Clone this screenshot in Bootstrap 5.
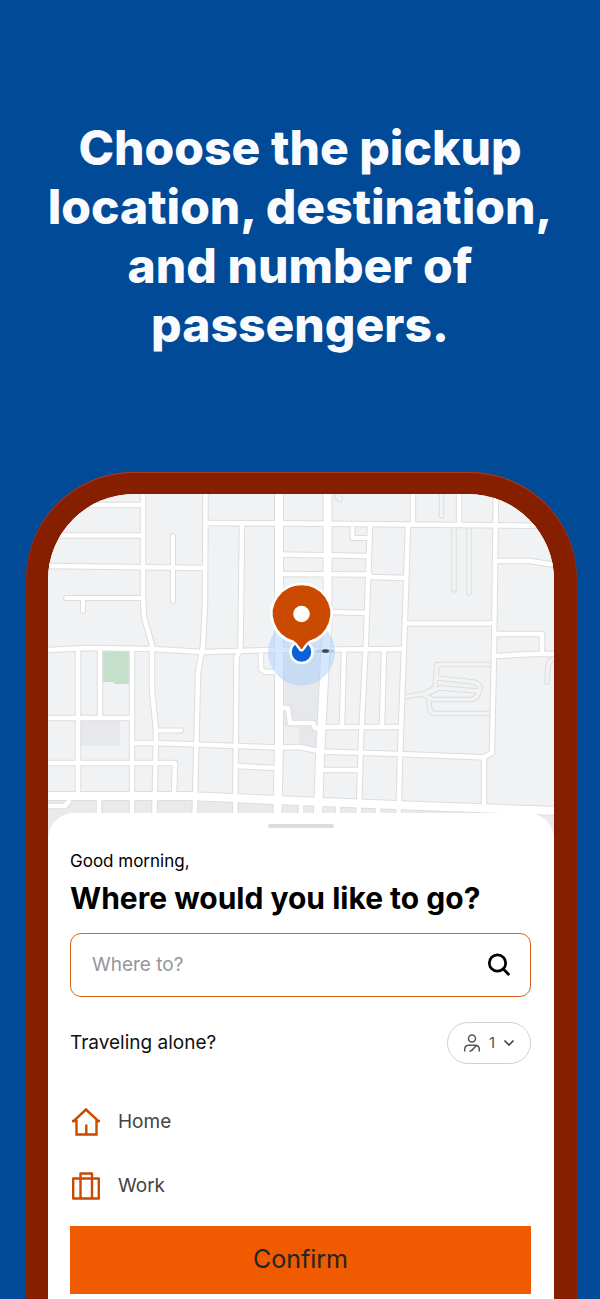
<!DOCTYPE html>
<html lang="en">
<head>
<meta charset="utf-8">
<meta name="viewport" content="width=device-width, initial-scale=1">
<title>Where would you like to go?</title>
<link href="https://cdn.jsdelivr.net/npm/bootstrap@5.3.0/dist/css/bootstrap.min.css" rel="stylesheet">
<style>
  body { background: #004a97; color: #000; font-family: Inter, "Liberation Sans", sans-serif; }
  .promo-title { padding: 118px 24px 0; margin: 0 0 118px; font-size: 48px; line-height: 59px; font-weight: 800; color: #fafbff; }
  .phone { margin: 0 23px 0 26px; padding: 22px 23px 0 22px; background: #851f00; border-radius: 107px 107px 0 0; box-shadow: inset 0 1px 1px #a8432a; }
  .screen { background: #fff; border-radius: 86px 86px 0 0; }
  .map-view { display: block; width: 100%; height: auto; }
  .sheet { margin-top: -27px; padding: 11px 23px 5px 22px; background: #fff; border-radius: 26px 26px 0 0; position: relative; }
  .handle { width: 66px; height: 4px; background: #dcdcdc; margin-bottom: 21px; }
  .greeting { font-size: 17px; line-height: 24px; margin-bottom: 7px; }
  .question { font-size: 30px; line-height: 36px; font-weight: 700; margin-bottom: 17px; white-space: nowrap; }
  .search-box { height: 64px; border: 1px solid #d9661f; border-radius: 11px; padding: 0 18px 0 21px; margin-bottom: 25px; }
  .search-box input { font-size: 19px; }
  .search-box input::placeholder { color: #979797; opacity: 1; }
  .alone { font-size: 19px; line-height: 24px; color: #111; }
  .pill { width: 84px; height: 42px; border: 1px solid #d2d2d2; font-size: 15px; color: #555; }
  .place { height: 64px; gap: 16px; font-size: 19px; color: #444; }
  .places { padding-top: 26px; margin-bottom: 8px; }
  .confirm { height: 68px; background: #f05a00; color: #242424; font-size: 25px; }
  .confirm:hover { background: #d95100; }
</style>
</head>
<body class="d-flex flex-column min-vh-100">
<h1 class="promo-title text-center">Choose the pickup location, destination, and number of passengers.</h1>

<main class="phone flex-grow-1 d-flex flex-column">
  <div class="screen overflow-hidden flex-grow-1 d-flex flex-column">
    <svg class="map-view" viewBox="48 494 506 346" role="img" aria-label="Map with your pickup location">
      <defs>
        <g id="streets" fill="none" stroke-linejoin="round">
          <path d="M143 490V598L144 617 152 645V690L156 730 154 840M205.500 490L205 603 203 645 198 673 196.500 740 194 840M242 523L240.500 650 236.500 657 235 840"/>
          <path d="M370 525L366 640 361 740 358 840M408 525L404 648 400 757 398 840M413 490V524M459 490V524M496 490L494 650 492 753 484 757V806"/>
          <path d="M78 650V794M100 649V718M132 649V840M99 800V840M344 650L342 727M384 650L382 727M301 804V840M378 804V840M338 804V840"/>
          <path d="M80 505H143M50 535.500H143M48 566L205 568M205 523L300 523.500 554 526M279 554.500L368 556M279 574L370 574.500 371 577 407 578M330 612L367 613M406 623.500H494"/>
          <path d="M496 561H530L556 565M496 634H542V653M48 650L87 648 153 649 203 652 237 651 270 650 405 649M496 656L533 654H556M261 653V669L265 672H279M48 718H132"/>
          <path d="M133 743H156L278 747.500 300 747 320 751.500 400 754 486 757.500M48 763H175L174 794M236 766L277 768M48 806H65L70 800M325 727H400M321 770H359M281 708H288L290 723H313L315 728 323 729"/>
        </g>
        <g id="avenues" fill="none" stroke-linejoin="round">
          <path d="M279 490V740L277 840M327.500 490V627L325 660 320 757 317 840M44 796H187L310 801.500 433 806.500 560 811"/>
        </g>
        <path id="ends" fill="none" stroke-linecap="round" stroke-linejoin="round" d="M173 536V601M66 598H143M83 598V611M157 730.500H181M352.500 528V538H367"/>
        <path id="lanes" fill="none" stroke-linecap="round" stroke-linejoin="round" d="M441.500 488V516M454 528V590M469 528V593M340 490V500L337 496M403 697L423 694 435 688 437 664.500H493M438 678L473 682Q483 684 479 692 477 700 468 699.500H433L424 695 440 688 477 691M429 700Q429 714 434 713.500H492M556 658Q548 660 548 668L547 682"/>
      </defs>
      <rect x="48" y="494" width="506" height="346" fill="#f1f2f3"/>
      <path d="M48 797H187L554 811V840H48Z" fill="#e9eaec"/>
      <path d="M281 655H324L319 749 281 746Z" fill="#e7e8eb"/>
      <path d="M281 727h18v20h-18z" fill="#eff0f1"/>
      <path d="M81 720h39v26H81z" fill="#e7e8eb"/>
      <path d="M103 651h27v33h-15l-2-2h-10z" fill="#c4e0ca"/>
      <use href="#lanes" stroke="#dcddde" stroke-width="5.500"/>
      <use href="#lanes" stroke="#f2f3f4" stroke-width="3.500"/>
      <g stroke="#dcddde">
        <use href="#streets" stroke-width="6.500"/>
        <use href="#ends" stroke-width="6"/>
        <use href="#avenues" stroke-width="10"/>
      </g>
      <g stroke="#fff">
        <use href="#streets" stroke-width="4.500"/>
        <use href="#ends" stroke-width="4"/>
        <use href="#avenues" stroke-width="8"/>
      </g>
      <circle cx="301.500" cy="652" r="33.500" fill="#a8d0fb" fill-opacity=".5"/>
      <ellipse cx="325" cy="651" rx="10" ry="2" fill="#9fb0c4" opacity=".5"/>
      <ellipse cx="325.500" cy="651" rx="3.500" ry="1.800" fill="#3b444e"/>
      <circle cx="301.500" cy="652" r="11" fill="#0a62d9" stroke="#fff" stroke-width="2.500"/>
      <path d="M301.500 650.500C299 650.500 298.500 645 293.500 642A30 29.500 0 1 1 309.500 642C304.500 645 304 650.500 301.500 650.500Z" fill="#c94a00" stroke="#fff" stroke-width="2.500"/>
      <circle cx="301.500" cy="614" r="8.300" fill="#fff"/>
    </svg>

    <section class="sheet flex-grow-1">
      <div class="handle rounded-pill mx-auto"></div>
      <p class="greeting">Good morning,</p>
      <h2 class="question">Where would you like to go?</h2>
      <form class="search-box d-flex align-items-center">
        <input type="text" class="form-control border-0 shadow-none bg-transparent p-0" placeholder="Where to?" aria-label="Where to?">
        <button type="submit" class="btn p-0 border-0 d-flex" aria-label="Search">
          <svg width="26" height="26" viewBox="0 0 26 26" fill="none" stroke="#000" stroke-width="2.700"><circle cx="11.500" cy="11" r="8.200"/><path d="M17.300 17L23.300 23"/></svg>
        </button>
      </form>
      <div class="d-flex justify-content-between align-items-center">
        <span class="alone">Traveling alone?</span>
        <button type="button" class="pill btn rounded-pill p-0 d-flex align-items-center justify-content-center" aria-label="Passengers: 1">
          <svg width="18" height="18" viewBox="0 0 18 18" fill="none" stroke="#555" stroke-width="1.500"><circle cx="9" cy="4.500" r="3.500"/><path d="M1.700 17.500V15Q2 11.300 6 11.300H12Q16 11.300 16.300 15V17.500M6.500 17.300Q9 17 10.500 14.500L13.500 11.500"/></svg>
          <span class="mx-2">1</span>
          <svg width="12" height="8" viewBox="0 0 12 8" fill="none" stroke="#444" stroke-width="1.700"><path d="M1.500 1.500L6 6 10.500 1.500"/></svg>
        </button>
      </div>
      <div class="places">
        <a href="#" class="place d-flex align-items-center text-decoration-none">
          <svg width="32" height="32" viewBox="0 0 32 32" fill="none" stroke="#c94a00" stroke-width="2.400"><path d="M2.800 15.800L16 3.500 29.200 15.800M2 15H6.500V28.500H26.500V15H30M16.300 28V18.500"/></svg>
          Home
        </a>
        <a href="#" class="place d-flex align-items-center text-decoration-none">
          <svg width="32" height="32" viewBox="0 0 32 32" fill="none" stroke="#c94a00" stroke-width="2.400" stroke-linejoin="round"><path d="M3.200 8.500H28.800V28.500H3.200ZM10.500 28.500V3.500H22V28.500"/></svg>
          Work
        </a>
      </div>
      <button type="button" class="confirm btn border-0 rounded-0 w-100 p-0">Confirm</button>
    </section>
  </div>
</main>
<script src="https://cdn.jsdelivr.net/npm/bootstrap@5.3.0/dist/js/bootstrap.bundle.min.js"></script>
</body>
</html>
